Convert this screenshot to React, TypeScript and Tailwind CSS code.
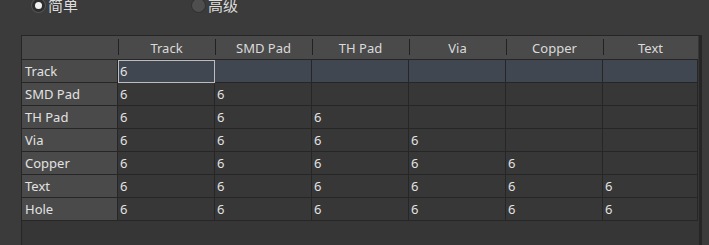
import React from "react";

const cols = ["Track", "SMD Pad", "TH Pad", "Via", "Copper", "Text"];
const rows = ["Track", "SMD Pad", "TH Pad", "Via", "Copper", "Text", "Hole"];

function Radio({ checked, label }: { checked: boolean; label: string }) {
  return (
    <div className="flex items-center gap-[3px]">
      <span
        className={
          checked
            ? "flex h-[13px] w-[13px] items-center justify-center rounded-full bg-[#2e2e2e] ring-1 ring-[#555]"
            : "h-[13px] w-[13px] rounded-full bg-[#4e4e4e] ring-1 ring-[#333]"
        }
      >
        {checked && <span className="h-[7px] w-[7px] rounded-full bg-[#f2f2f2]" />}
      </span>
      <span className="text-[15px] leading-5 text-[#dcdcdc]">{label}</span>
    </div>
  );
}

export default function App() {
  return (
    <div
      className="h-[245px] w-[709px] overflow-hidden bg-[#3b3b3b]"
      style={{ fontFamily: '"Noto Sans", "Noto Sans CJK SC", sans-serif' }}
    >
      {/* mode radios, cut off at the top */}
      <div className="-mt-[5px] flex h-5 pl-[32px]">
        <div className="w-[160px]">
          <Radio checked label="简单" />
        </div>
        <Radio checked={false} label="高级" />
      </div>

      {/* rule matrix */}
      <div className="ml-[21px] mt-[20px] h-[212px] w-[681px] border border-r-[3px] border-[#262626] bg-[#363636]">
        <div className="grid grid-cols-[96px_repeat(5,97px)_95px] text-[13px] leading-[22px] text-[#e2e2e2]">
          {/* header */}
          <div className="h-[24px] border-b border-[#262626] bg-[#4a4a4a]" />
          {cols.map((c) => (
            <div
              key={c}
              className="relative flex h-[24px] items-center justify-center border-b border-[#262626] bg-[#4a4a4a] text-[#dadada]"
            >
              <span className="absolute left-0 top-[3px] h-[16px] w-px bg-[#222]" />
              {c}
            </div>
          ))}

          {rows.map((r, i) => (
            <React.Fragment key={r}>
              <div className="h-[23px] border-b border-r border-[#262626] bg-[#4a4a4a] pl-[3px]">{r}</div>
              {cols.map((c, j) => (
                <div
                  key={c}
                  className={
                    "h-[23px] border-b border-r border-[#262626] pl-[2px] " +
                    (i === 0 ? "bg-[#404750] " : "bg-[#373737] ") +
                    (i === 0 && j === 0 ? "outline outline-1 -outline-offset-1 outline-[#bdbdbd] " : "")
                  }
                >
                  {j <= i ? "6" : ""}
                </div>
              ))}
            </React.Fragment>
          ))}
        </div>
      </div>
    </div>
  );
}
